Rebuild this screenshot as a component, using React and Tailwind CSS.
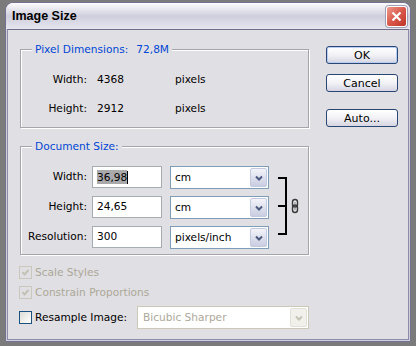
import React from "react";

function Chevron({ color = "#4d5a80" }) {
  return (
    <svg width="8" height="6" viewBox="0 0 8 6">
      <path d="M1 1.5 L4 4.5 L7 1.5" fill="none" stroke={color} strokeWidth="2" />
    </svg>
  );
}

function Check({ color }) {
  return (
    <svg width="9" height="9" viewBox="0 0 9 9">
      <path d="M1.5 4 L3.5 6.5 L7.5 2" fill="none" stroke={color} strokeWidth="2" />
    </svg>
  );
}

function Group({ title, className, children }) {
  return (
    <div className={"relative border border-[#a6a5ab] shadow-[1px_1px_0_#ffffff,inset_1px_1px_0_#ffffff] " + className}>
      <div className="absolute left-[11px] -top-[8px] px-[3px] bg-[#e0dfe3] text-[#0046d5] leading-[14px] flex">
        {title}
      </div>
      {children}
    </div>
  );
}

function Dropdown({ value }) {
  return (
    <div className="w-[99px] h-[23px] border border-[#7f9db9] bg-white flex items-center">
      <span className="flex-1 pl-[4px] text-black">{value}</span>
      <div className="w-[17px] h-[19px] mr-[1px] rounded-[2px] border border-[#c3c9de] bg-gradient-to-b from-[#f3f4fa] to-[#c9cde0] flex items-center justify-center">
        <Chevron />
      </div>
    </div>
  );
}

function Input({ children }) {
  return (
    <div className="w-[70px] h-[22px] border border-[#a5acb2] bg-white flex items-center pl-[4px] text-black">
      {children}
    </div>
  );
}

function Button({ children, className }) {
  return (
    <div className={"w-[72px] h-[18px] rounded-[3px] border border-[#2a4673] bg-gradient-to-b from-white via-[#f2f2f6] to-[#d6d5e2] flex items-center justify-center text-black text-[11px] leading-none " + className}>
      {children}
    </div>
  );
}

export default function App() {
  return (
    <div className="w-[416px] h-[346px] bg-[#7b7b7b] pt-[2px] pl-[5px] font-['DejaVu_Sans',sans-serif] text-[10.6px]">
      <div className="w-[406px] h-[340px] rounded-t-[8px] border border-[#737290] bg-[#cfcedd] flex flex-col overflow-hidden">
        {/* Title bar */}
        <div className="h-[26px] shrink-0 flex items-center pl-[6px] pr-[3px] bg-gradient-to-b from-[#fdfdfe] via-[#cfcedd] to-[#e6e6ee]">
          <span className="flex-1 font-['Liberation_Sans',sans-serif] font-bold text-[12.5px] text-black">Image Size</span>
          <div className="w-[21px] h-[21px] rounded-[3px] border border-white bg-gradient-to-br from-[#ec9a8e] via-[#d9584a] to-[#bd3326] flex items-center justify-center shadow-[0_0_0_1px_#a0a0b4]">
            <svg width="11" height="11" viewBox="0 0 11 11">
              <path d="M1.5 1.5 L9.5 9.5 M9.5 1.5 L1.5 9.5" stroke="white" strokeWidth="2.2" />
            </svg>
          </div>
        </div>
        {/* Body */}
        <div className="flex-1 mx-[1px] mb-[1px] border border-[#8d8ba9] border-t-[#6e6d8a] bg-[#e0dfe3] flex">
          <div className="w-[289px] ml-[12px] flex flex-col">
            <Group
              className="mt-[19px] h-[79px] pt-[15px]"
              title={
                <>
                  <span>Pixel Dimensions:</span>
                  <span className="ml-[8px]">72,8M</span>
                </>
              }
            >
              <div className="h-[29px] flex items-center text-black">
                <span className="w-[66px] text-right">Width:</span>
                <span className="w-[78px] ml-[10px]">4368</span>
                <span>pixels</span>
              </div>
              <div className="h-[29px] flex items-center text-black">
                <span className="w-[66px] text-right">Height:</span>
                <span className="w-[78px] ml-[10px]">2912</span>
                <span>pixels</span>
              </div>
            </Group>

            <Group className="mt-[18px] h-[109px] pt-[19px] flex" title={<span>Document Size:</span>}>
              <div className="flex flex-col gap-[8px]">
                {[
                  ["Width:", "sel", "cm"],
                  ["Height:", "24,65", "cm"],
                  ["Resolution:", "300", "pixels/inch"],
                ].map(([label, val, unit]) => (
                  <div key={label} className="h-[22px] flex items-start">
                    <span className="w-[66px] h-[22px] flex items-center justify-end text-black">{label}</span>
                    <div className="ml-[5px]">
                      <Input>
                        {val === "sel" ? (
                          <span className="flex items-center">
                            <span className="bg-[#a9a9ab] text-black leading-[14px]">36,98</span>
                            <span className="w-[1px] h-[13px] bg-black" />
                          </span>
                        ) : (
                          val
                        )}
                      </Input>
                    </div>
                    <div className="ml-[8px]">
                      <Dropdown value={unit} />
                    </div>
                  </div>
                ))}
              </div>
              <svg width="24" height="82" viewBox="0 0 24 82" className="ml-[8px]">
                <path d="M1 12 H10 M1 40 H10 M1 68 H10 M9 11 V69" stroke="black" strokeWidth="2" fill="none" />
                <rect x="15.5" y="33.5" width="5" height="7.5" rx="2.5" fill="#e8e8e8" stroke="#3a3a3a" strokeWidth="1.4" />
                <rect x="15.5" y="39" width="5" height="7.5" rx="2.5" fill="none" stroke="#3a3a3a" strokeWidth="1.4" />
                <path d="M18 36 V38 M18 42 V44" stroke="#888" strokeWidth="1" />
              </svg>
            </Group>

            <div className="mt-[11px] flex flex-col gap-[7px]">
              <div className="h-[13px] flex items-center -ml-[1px]">
                <div className="w-[13px] h-[13px] border border-[#cac8bc] flex items-center justify-center">
                  <Check color="#c3c1b4" />
                </div>
                <span className="ml-[3px] text-[#aca899]">Scale Styles</span>
              </div>
              <div className="h-[13px] flex items-center -ml-[1px]">
                <div className="w-[13px] h-[13px] border border-[#cac8bc] flex items-center justify-center">
                  <Check color="#c3c1b4" />
                </div>
                <span className="ml-[3px] text-[#aca899]">Constrain Proportions</span>
              </div>
              <div className="h-[23px] flex items-center -ml-[1px]">
                <div className="w-[13px] h-[13px] border border-[#1c5180] bg-gradient-to-br from-[#dcdcd7] to-white" />
                <span className="ml-[3px] text-black">Resample Image:</span>
                <div className="ml-auto w-[172px] h-[23px] border border-[#cbc8b8] bg-white flex items-center">
                  <span className="flex-1 pl-[5px] text-[#aca899]">Bicubic Sharper</span>
                  <div className="w-[17px] h-[19px] mr-[1px] rounded-[2px] border border-[#e2e1d8] bg-[#f1f0ea] flex items-center justify-center">
                    <Chevron color="#c5c3b5" />
                  </div>
                </div>
              </div>
            </div>
          </div>

          <div className="ml-[17px] mt-[16px] flex flex-col">
            <Button className="shadow-[inset_0_0_0_1px_#b8cdf5]">OK</Button>
            <Button className="mt-[10px]">Cancel</Button>
            <Button className="mt-[17px]">Auto...</Button>
          </div>
        </div>
      </div>
    </div>
  );
}
